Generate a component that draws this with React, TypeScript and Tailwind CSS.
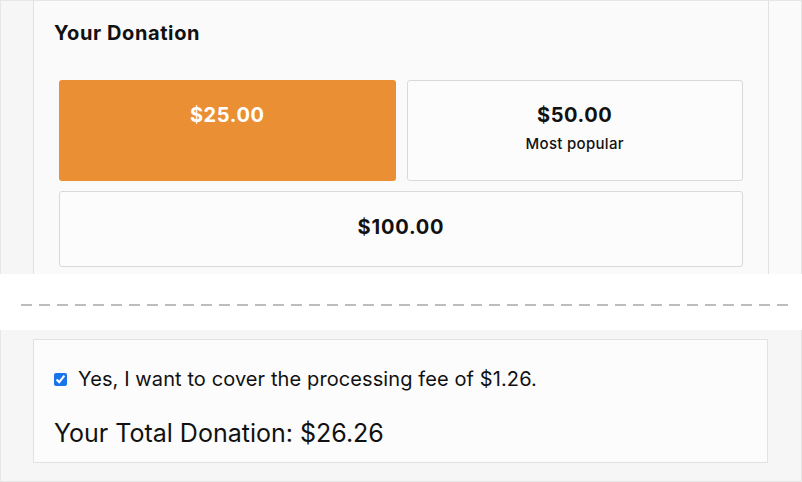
import { useState } from "react";

const amounts = [
  { value: "$25.00", note: "" },
  { value: "$50.00", note: "Most popular" },
];

export default function App() {
  const [selected, setSelected] = useState("$25.00");
  const [coverFee, setCoverFee] = useState(true);

  return (
    <div className="w-[802px] h-[482px] overflow-hidden bg-white font-['Inter',sans-serif] text-[#111]">
      {/* donation amounts */}
      <section className="flex h-[274px] border-l border-t border-r border-[#e6e6e6] bg-[#f6f6f6]">
        <div className="w-[32px]" />
        <div className="w-[736px] border-l border-r border-[#e2e2e2] bg-[#fafafa] px-[20px] pt-[20px]">
          <h2 className="text-[20px] font-bold leading-[24px] tracking-[0.6px]">Your Donation</h2>
          <div className="mt-[35px] grid grid-cols-2 gap-x-[11px] gap-y-[10px] pl-[5px] pr-[5px]">
            {amounts.map((a) => {
              const active = selected === a.value;
              return (
                <button
                  key={a.value}
                  onClick={() => setSelected(a.value)}
                  className={
                    active
                      ? "flex h-[101px] flex-col items-center rounded-[3px] bg-[#eb8f34] pt-[21px] text-white"
                      : "flex h-[101px] flex-col items-center rounded-[3px] border border-[#d9d9d9] bg-[#fcfcfc] pt-[20px]"
                  }
                >
                  <span className="text-[20px] font-bold leading-[28px] tracking-[0.6px]">{a.value}</span>
                  {a.note && (
                    <span className="mt-[5px] text-[15px] font-medium leading-[20px] tracking-[0.3px]">{a.note}</span>
                  )}
                </button>
              );
            })}
            <button
              onClick={() => setSelected("$100.00")}
              className={
                selected === "$100.00"
                  ? "col-span-2 flex h-[76px] items-center justify-center rounded-[3px] bg-[#eb8f34] text-white"
                  : "col-span-2 flex h-[76px] items-center justify-center rounded-[3px] border border-[#d9d9d9] bg-[#fcfcfc]"
              }
            >
              <span className="-mt-[4px] text-[20px] font-bold leading-[28px] tracking-[0.8px]">$100.00</span>
            </button>
          </div>
        </div>
        <div className="flex-1 bg-[#fafafa]" />
      </section>

      {/* separator */}
      <div className="flex h-[56px] items-center bg-white pl-[21px] pr-[14px] pt-[5px]">
        <div className="h-[2px] w-full bg-[repeating-linear-gradient(90deg,#bdbdbd_0px,#bdbdbd_11px,transparent_11px,transparent_18px)]" />
      </div>

      {/* total */}
      <section className="h-[152px] border-l border-r border-b border-[#e6e6e6] bg-[#f6f6f6] pl-[32px] pr-[33px] pt-[9px]">
        <div className="h-[124px] border border-[#e2e2e2] bg-[#fcfcfc] px-[20px] pt-[27px]">
          <label className="flex items-center gap-[11px] text-[20px] leading-[24px] tracking-[0.1px]">
            <input
              type="checkbox"
              checked={coverFee}
              onChange={(e) => setCoverFee(e.target.checked)}
              className="m-0 h-[13px] w-[13px] accent-[#1a73e8]"
            />
            Yes, I want to cover the processing fee of $1.26.
          </label>
          <p className="mt-[27px] text-[25px] leading-[30px]">
            Your Total Donation: {coverFee ? "$26.26" : "$25.00"}
          </p>
        </div>
      </section>
    </div>
  );
}
